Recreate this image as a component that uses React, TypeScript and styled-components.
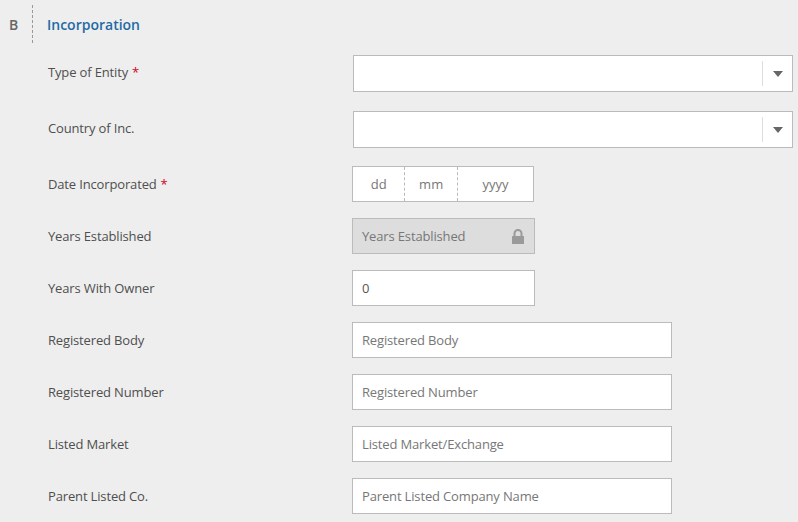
import styled, { createGlobalStyle } from "styled-components";

const GlobalStyle = createGlobalStyle`
  html, body {
    margin: 0;
    padding: 0;
    background: #eeeeee;
    font-family: "Open Sans", "Liberation Sans", sans-serif;
    font-size: 13px;
    color: #555;
  }
`;

const Page = styled.div`
  width: 798px;
  height: 522px;
  overflow: hidden;
  background: #eeeeee;
`;

const Header = styled.header`
  display: flex;
  align-items: center;
  height: 38px;
  margin-top: 5px;
`;

const SectionLetter = styled.span`
  width: 23px;
  height: 100%;
  padding-left: 9px;
  display: flex;
  align-items: center;
  border-right: 1px dashed #999;
  font-size: 14px;
  font-weight: 600;
  color: #666;
`;

const SectionTitle = styled.h2`
  margin: 0 0 0 14px;
  font-size: 14px;
  font-weight: 600;
  color: #1f6aa5;
`;

const Form = styled.div`
  display: flex;
  flex-direction: column;
  padding-left: 48px;
`;

const Row = styled.div<{ $top: number; $height: number; $lift?: number }>`
  display: grid;
  grid-template-columns: 304px 1fr;
  align-items: center;
  height: ${(p) => p.$height}px;
  margin-top: ${(p) => p.$top}px;

  & > label {
    padding-bottom: ${(p) => p.$lift ?? 0}px;
  }
`;

const Label = styled.label`
  font-size: 13px;
  letter-spacing: -0.15px;
  color: #4f4f4f;
`;

const Required = styled.span`
  color: #d0021b;
  margin-left: 4px;
`;

const SelectBox = styled.div`
  display: flex;
  align-items: center;
  width: 440px;
  height: 37px;
  margin-left: 1px;
  box-sizing: border-box;
  background: #fff;
  border: 1px solid #bbb;
`;

const SelectValue = styled.div`
  flex: 1;
`;

const SelectToggle = styled.div`
  width: 29px;
  height: 25px;
  display: flex;
  align-items: center;
  justify-content: center;
  border-left: 1px solid #ddd;
`;

const Arrow = styled.span`
  width: 0;
  height: 0;
  border-left: 5px solid transparent;
  border-right: 5px solid transparent;
  border-top: 6px solid #666;
`;

const TextInput = styled.input<{ $width: number }>`
  width: ${(p) => p.$width}px;
  height: 36px;
  box-sizing: border-box;
  padding: 0 9px;
  border: 1px solid #bbb;
  background: #fff;
  font-family: inherit;
  font-size: 13px;
  letter-spacing: -0.15px;
  color: #555;
  outline: none;

  &::placeholder {
    color: #777;
    opacity: 1;
  }
`;

const DateGroup = styled.div`
  display: flex;
  width: 182px;
  height: 36px;
  box-sizing: border-box;
  background: #fff;
  border: 1px solid #bbb;
`;

const DatePart = styled.div<{ $width: number; $last?: boolean }>`
  width: ${(p) => p.$width}px;
  display: flex;
  align-items: center;
  justify-content: center;
  color: #777;
  border-right: ${(p) => (p.$last ? "none" : "1px dashed #bbb")};
`;

const LockedBox = styled.div`
  display: flex;
  align-items: center;
  justify-content: space-between;
  width: 183px;
  height: 36px;
  box-sizing: border-box;
  padding: 0 10px 0 9px;
  background: #dddddd;
  border: 1px solid #bbb;
  letter-spacing: -0.15px;
  color: #777;
`;

function Lock() {
  return (
    <svg width="12" height="15" viewBox="0 0 12 15">
      <path
        d="M2.5 7V4.5a3.5 3.5 0 0 1 7 0V7"
        fill="none"
        stroke="#9a9a9a"
        strokeWidth="2"
      />
      <rect x="0" y="7" width="12" height="8" rx="0.5" fill="#9a9a9a" />
    </svg>
  );
}

function Select() {
  return (
    <SelectBox>
      <SelectValue />
      <SelectToggle>
        <Arrow />
      </SelectToggle>
    </SelectBox>
  );
}

const textFields = [
  { label: "Registered Body", placeholder: "Registered Body" },
  { label: "Registered Number", placeholder: "Registered Number" },
  { label: "Listed Market", placeholder: "Listed Market/Exchange" },
  { label: "Parent Listed Co.", placeholder: "Parent Listed Company Name" },
];

export default function App() {
  return (
    <Page>
      <GlobalStyle />
      <Header>
        <SectionLetter>B</SectionLetter>
        <SectionTitle>Incorporation</SectionTitle>
      </Header>
      <Form>
        <Row $top={12} $height={37} $lift={3}>
          <Label>
            Type of Entity<Required>*</Required>
          </Label>
          <Select />
        </Row>
        <Row $top={19} $height={37} $lift={3}>
          <Label>Country of Inc.</Label>
          <Select />
        </Row>
        <Row $top={18} $height={36}>
          <Label>
            Date Incorporated<Required>*</Required>
          </Label>
          <DateGroup>
            <DatePart $width={52}>dd</DatePart>
            <DatePart $width={52}>mm</DatePart>
            <DatePart $width={76} $last>
              yyyy
            </DatePart>
          </DateGroup>
        </Row>
        <Row $top={16} $height={36}>
          <Label>Years Established</Label>
          <LockedBox>
            Years Established
            <Lock />
          </LockedBox>
        </Row>
        <Row $top={16} $height={36}>
          <Label>Years With Owner</Label>
          <TextInput $width={183} defaultValue="0" />
        </Row>
        {textFields.map((f) => (
          <Row key={f.label} $top={16} $height={36}>
            <Label>{f.label}</Label>
            <TextInput $width={320} placeholder={f.placeholder} />
          </Row>
        ))}
      </Form>
    </Page>
  );
}
